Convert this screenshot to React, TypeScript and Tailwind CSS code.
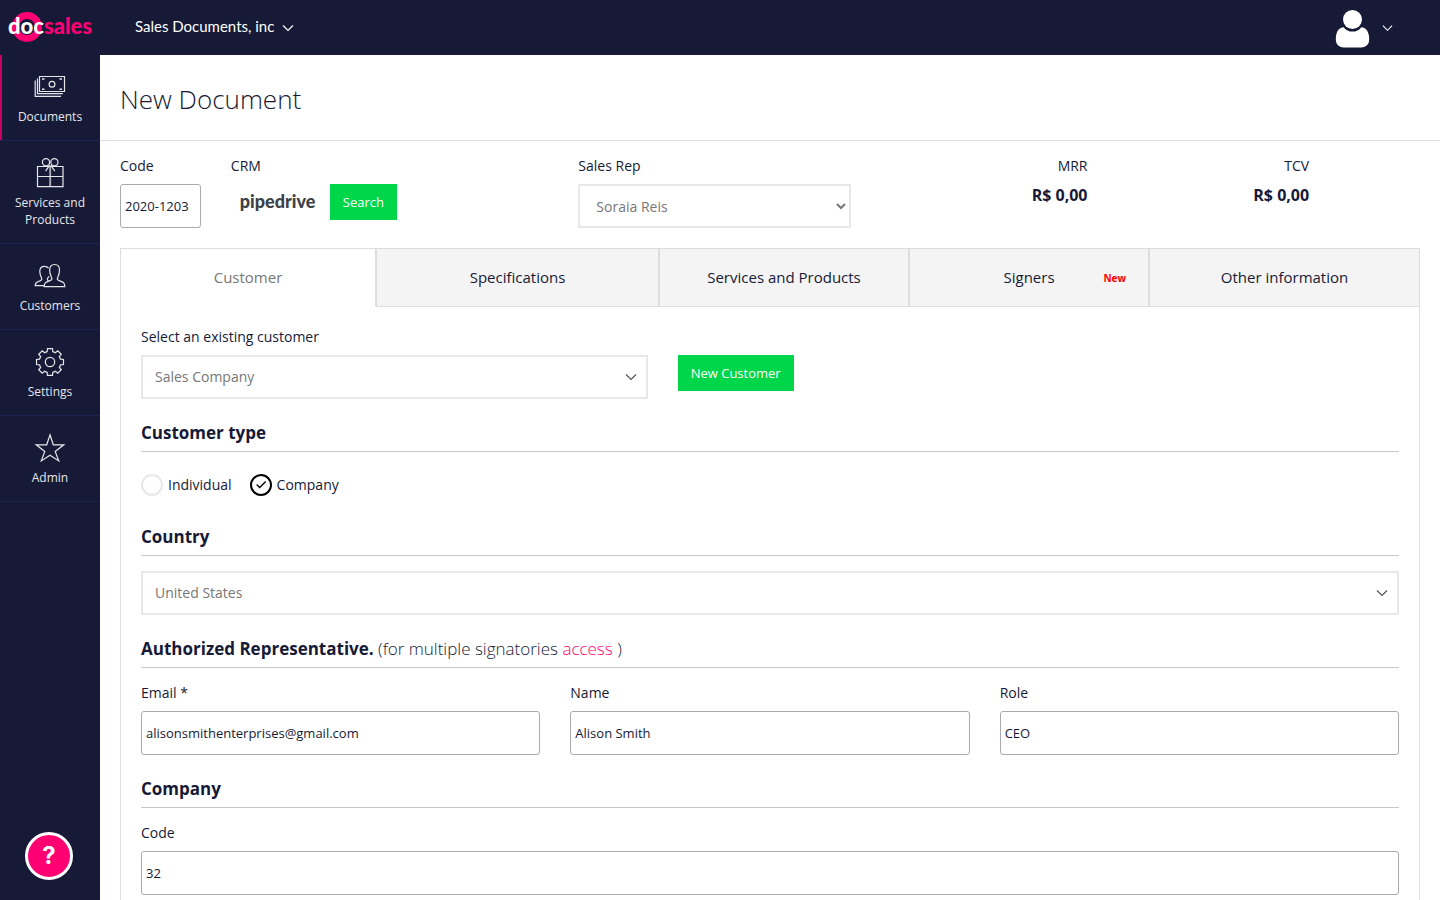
import { useState } from "react";
import type { ReactNode } from "react";

const gearPath = (() => {
  const point = (radius: number, degrees: number) => {
    const a = (degrees * Math.PI) / 180;
    return `${(16 + radius * Math.cos(a)).toFixed(2)} ${(16 + radius * Math.sin(a)).toFixed(2)}`;
  };
  let d = "";
  for (let k = 0; k < 8; k++) {
    const a = k * 45;
    d += k === 0 ? `M${point(10.8, a - 15)}` : `A10.8 10.8 0 0 1 ${point(10.8, a - 15)}`;
    d += `L${point(13.7, a - 10.5)}L${point(13.7, a + 10.5)}L${point(10.8, a + 15)}`;
  }
  return d + `A10.8 10.8 0 0 1 ${point(10.8, -15)}Z`;
})();

function NavIcon({ children }: { children: ReactNode }) {
  return (
    <svg className="size-8" viewBox="0 0 32 32" fill="none" stroke="currentColor" strokeWidth="1.2" aria-hidden="true">
      {children}
    </svg>
  );
}

function MoneyIcon() {
  return (
    <NavIcon>
      <path d="M5.5 5.5h25v15h-25zM3.5 7.5v15.2h25.3M1.2 9.5v15.8h25.8" />
      <circle cx="18" cy="13.3" r="2.9" />
      <path d="M8 8h2.5M25.5 8H28M8 18.2h2.5M25.5 18.2H28" strokeWidth="1.6" />
    </NavIcon>
  );
}

function GiftIcon() {
  return (
    <NavIcon>
      <path d="M3.5 9.5h25.5v20.2H3.5zM3.5 19.5H29" />
      <path d="M16.2 9.5v20" strokeWidth="1.8" opacity=".75" />
      <circle cx="12" cy="5.2" r="3.6" />
      <circle cx="20.4" cy="5.2" r="3.6" />
      <path d="M15.6 8.2l-4 6M16.8 8.2l4 6" />
    </NavIcon>
  );
}

function PeopleIcon() {
  return (
    <NavIcon>
      <path d="M10.2 26.6c0-3.4 1-4.3 4-5.2 2.600-.8 3.700-1.200 3.700-2.400 0-1.600-2.200-3.700-2.200-8.800 0-3.700 1.800-5.700 4.900-5.700s4.900 2 4.900 5.700c0 5.100-2.200 7.200-2.200 8.800 0 1.200 1.200 1.600 3.700 2.400 2.800.9 3.800 1.800 3.800 5.200z" />
      <path d="M14.600 8.200C13.700 7 12.200 6.400 10.400 6.400c-2.800 0-4.600 1.700-4.600 5.100 0 4.500 2 6 2 7.500 0 1.200-1.300 1.800-3.500 2.500-2.300.8-3.100 1.600-3.100 4.200h8.800M15 16.200c-.8 1.400-1.600 2-1.600 3 0 .9.400 1.300 1.200 1.700" />
    </NavIcon>
  );
}

function GearIcon() {
  return (
    <NavIcon>
      <path d={gearPath} />
      <circle cx="16" cy="16" r="4.700" />
    </NavIcon>
  );
}

function StarIcon() {
  return (
    <NavIcon>
      <path d="M16 2.800l3.300 10h10.500l-8.600 6.600 3.500 9.500L16 23.300l-8.700 5.600 3.500-9.500-8.600-6.600h10.500z" />
    </NavIcon>
  );
}

function Chevron({ className }: { className: string }) {
  return (
    <svg className={className} viewBox="0 0 12 8" fill="none" stroke="currentColor" strokeWidth="1.200" aria-hidden="true">
      <path d="M1 1.500l5 5 5-5" />
    </svg>
  );
}

const navItems = [
  { label: "Documents", icon: <MoneyIcon />, active: true },
  { label: "Services and Products", icon: <GiftIcon />, active: false },
  { label: "Customers", icon: <PeopleIcon />, active: false },
  { label: "Settings", icon: <GearIcon />, active: false },
  { label: "Admin", icon: <StarIcon />, active: false },
];

function SectionTitle({ children }: { children: ReactNode }) {
  return (
    <h2 className="mt-[22px] mb-[15px] border-b border-[#c8c8c8] pb-1.5 text-[17px] leading-6 font-bold">
      {children}
    </h2>
  );
}

function Label({ htmlFor, children }: { htmlFor: string; children: ReactNode }) {
  return (
    <label htmlFor={htmlFor} className="mb-2 block text-sm leading-5">
      {children}
    </label>
  );
}

function GreenButton({ children }: { children: ReactNode }) {
  return (
    <button type="button" className="h-9 bg-[#00d649] px-[13px] pb-px text-[13px] leading-5 font-medium text-white">
      {children}
    </button>
  );
}

function TextField({ id, label, value, type = "text" }: { id: string; label: string; value: string; type?: string }) {
  return (
    <div>
      <Label htmlFor={id}>{label}</Label>
      <input
        id={id}
        type={type}
        defaultValue={value}
        className="h-11 w-full rounded-[3px] border border-[#aaaaaa] bg-white px-1 text-[13px]"
      />
    </div>
  );
}

function SelectBox({ id, value, label }: { id: string; value: string; label?: string }) {
  return (
    <div className="relative">
      <select
        id={id}
        aria-label={label}
        className="h-11 w-full appearance-none border-2 border-[#e8e8e8] bg-white px-3 text-sm text-[#777777]"
      >
        <option>{value}</option>
      </select>
      <Chevron className="pointer-events-none absolute top-[18px] right-[11px] h-2 w-3 text-[#555555]" />
    </div>
  );
}

function Radio({ label, checked, onChange }: { label: string; checked: boolean; onChange: () => void }) {
  return (
    <label className="flex items-center gap-[5px] text-sm leading-[22px]">
      <span className="relative block size-[22px]">
        <input
          type="radio"
          name="customer-type"
          checked={checked}
          onChange={onChange}
          className="block size-[22px] appearance-none rounded-full border-2 border-[#e8e8e8] checked:border-black"
        />
        {checked && (
          <svg
            className="pointer-events-none absolute inset-0 size-[22px] text-black"
            viewBox="0 0 22 22"
            fill="none"
            stroke="currentColor"
            strokeWidth="1.300"
            aria-hidden="true"
          >
            <path d="M6.700 10.500l3 3 6-6" />
          </svg>
        )}
      </span>
      {label}
    </label>
  );
}

function Total({ label, className }: { label: string; className: string }) {
  return (
    <div className={className}>
      <div className="text-sm leading-5">{label}</div>
      <div className="mt-2 text-base leading-[22px] font-bold">R$ 0,00</div>
    </div>
  );
}

const tabs = ["Customer", "Specifications", "Services and Products", "Signers", "Other information"];

export default function App() {
  const [tab, setTab] = useState("Customer");
  const [customerType, setCustomerType] = useState("Company");

  return (
    <div className="flex min-h-screen flex-col bg-white font-['Open_Sans',sans-serif] text-[#161a36]">
      <header className="flex h-[55px] items-center bg-[#161a36] text-white">
        <a href="#home" className="relative ml-2 flex h-[30px] w-[127px] items-center pb-1">
          <svg className="absolute -top-px left-1 size-[30px]" viewBox="0 0 30 30" fill="none" aria-hidden="true">
            <circle cx="15" cy="15" r="11.500" stroke="#ff0073" strokeWidth="7" />
          </svg>
          <span className="relative font-['Lato',sans-serif] text-[22px] leading-[26px] font-black">
            doc<span className="text-[#ff0073]">sales</span>
          </span>
        </a>
        <button type="button" className="flex items-center gap-2 pb-[3px] font-['Lato',sans-serif] text-[15px] leading-5">
          Sales Documents, inc
          <Chevron className="mt-1 h-2 w-3" />
        </button>
        <button type="button" aria-label="Account" className="mr-[47px] ml-auto flex items-center gap-3 pt-px">
          <svg className="h-[39px] w-9" viewBox="0 0 36 39" fill="#ffffff" aria-hidden="true">
            <circle cx="18.500" cy="10.500" r="9.500" />
            <path d="M9.700 18.200c2 3 5.200 4.400 8.800 4.400s6.800-1.400 8.800-4.400c3.700.2 6.400 2.900 7.400 7.300.6 2.700.6 5.300.2 7.300-.5 3-3.600 5.600-7.400 5.600h-18c-3.800 0-6.900-2.600-7.400-5.600-.4-2-.4-4.600.2-7.300 1-4.400 3.700-7.100 7.400-7.300z" />
          </svg>
          <Chevron className="h-2 w-[11px]" />
        </button>
      </header>

      <div className="flex flex-1">
        <aside className="flex w-[100px] shrink-0 flex-col bg-[#161a36] text-[#e6e6ea]">
          <nav className="flex flex-col">
            {navItems.map((item) => (
              <a
                key={item.label}
                href={`#${item.label}`}
                className="relative flex flex-col items-center border-b border-[#1c2350] px-3 pt-4 pb-[15px] text-center text-xs leading-[17px]"
              >
                {item.active && <span className="absolute inset-y-0 left-0 w-0.5 bg-[#c8005f]" />}
                {item.icon}
                <span className="mt-[5px]">{item.label}</span>
              </a>
            ))}
          </nav>
          <button
            type="button"
            aria-label="Help"
            className="mt-auto mb-5 ml-[25px] flex size-12 items-center justify-center rounded-full border-3 border-white bg-[#ff0073] font-['Inter',sans-serif] text-2xl font-bold text-white"
          >
            ?
          </button>
        </aside>

        <main className="flex min-w-0 flex-1 flex-col">
          <div className="border-b border-[#dddddd] px-5 pt-6 pb-[21px]">
            <h1 className="text-[26px] leading-10 font-light">New Document</h1>
          </div>

          <div className="flex flex-1 flex-col px-5 pt-[15px]">
            <div className="grid grid-cols-12 gap-x-[30px]">
              <TextField id="doc-code" label="Code" value="2020-1203" />
              <div className="col-span-3">
                <div className="mb-2 text-sm leading-5">CRM</div>
                <div className="flex h-9 items-center">
                  <div className="w-[99px] pb-0.5 pl-[9px] font-['Lato',sans-serif] text-[18px] leading-5 font-black text-[#3d4247]">
                    pipedrive
                  </div>
                  <GreenButton>Search</GreenButton>
                </div>
              </div>
              <div className="col-span-3 px-[15px]">
                <Label htmlFor="sales-rep">Sales Rep</Label>
                <select
                  id="sales-rep"
                  className="h-11 w-full border-2 border-[#e8e8e8] bg-white pl-3 text-sm text-[#777777]"
                >
                  <option>Soraia Reis</option>
                </select>
              </div>
              <Total label="MRR" className="col-span-2 text-right" />
              <Total label="TCV" className="col-span-2 text-right" />
            </div>

            <div
              role="tablist"
              className="mt-5 grid grid-cols-[256fr_283fr_250fr_240fr_269fr] border-x border-t border-[#dddddd]"
            >
              {tabs.map((name) => (
                <button
                  key={name}
                  type="button"
                  role="tab"
                  aria-selected={tab === name}
                  onClick={() => setTab(name)}
                  className={`relative h-[58px] border-r-2 border-b border-[#dddddd] pb-0.5 text-[15px] leading-5 last:border-r-0 ${
                    tab === name ? "border-b-transparent bg-white text-[#777777]" : "bg-[#f4f4f4]"
                  }`}
                >
                  {name}
                  {name === "Signers" && (
                    <span className="absolute top-[19px] right-[22px] text-[10px] leading-5 font-bold text-[#ff0000]">New</span>
                  )}
                </button>
              ))}
            </div>

            <form className="flex-1 border-x border-[#dddddd] px-5 pt-5" onSubmit={(e) => e.preventDefault()}>
              <Label htmlFor="customer">Select an existing customer</Label>
              <div className="grid grid-cols-12 gap-x-[30px]">
                <div className="col-span-5">
                  <SelectBox id="customer" value="Sales Company" />
                </div>
                <div className="col-span-4">
                  <GreenButton>New Customer</GreenButton>
                </div>
              </div>

              <SectionTitle>Customer type</SectionTitle>
              <div className="flex gap-[18px] py-[7px]">
                {["Individual", "Company"].map((name) => (
                  <Radio key={name} label={name} checked={customerType === name} onChange={() => setCustomerType(name)} />
                ))}
              </div>

              <SectionTitle>Country</SectionTitle>
              <SelectBox id="country" label="Country" value="United States" />

              <SectionTitle>
                Authorized Representative.{" "}
                <span className="font-light">
                  (for multiple signatories{" "}
                  <a href="#access" className="text-[#ff0073]">
                    access
                  </a>{" "}
                  )
                </span>
              </SectionTitle>
              <div className="grid grid-cols-3 gap-x-[30px]">
                <TextField id="email" label="Email *" type="email" value="alisonsmithenterprises@gmail.com" />
                <TextField id="name" label="Name" value="Alison Smith" />
                <TextField id="role" label="Role" value="CEO" />
              </div>

              <SectionTitle>Company</SectionTitle>
              <TextField id="company-code" label="Code" value="32" />
            </form>
          </div>
        </main>
      </div>
    </div>
  );
}
